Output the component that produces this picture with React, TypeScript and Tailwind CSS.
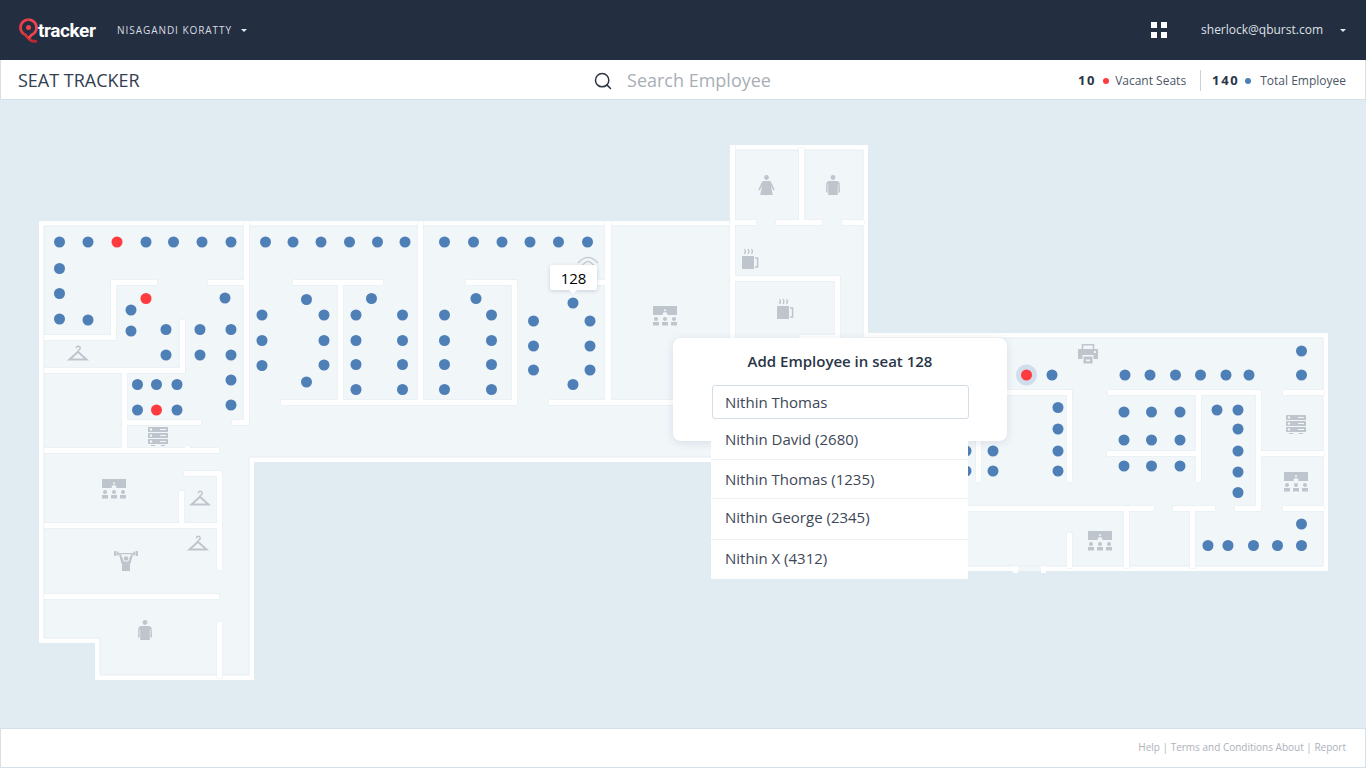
import React from 'react';
import { Search } from 'lucide-react';

type Seat = [number, number];

// floor plan geometry, in page pixels
const walls: [number, number, number, number][] = [
  [244, 221, 5, 204],
  [232, 420, 17, 5],
  [111, 280, 46, 5],
  [208, 280, 36, 5],
  [111, 280, 5, 60],
  [44, 335, 72, 5],
  [44, 368, 141, 5],
  [180, 320, 5, 53],
  [122, 368, 5, 82],
  [127, 420, 74, 5],
  [44, 448, 175, 5],
  [185, 446, 5, 5],
  [184, 471, 38, 5],
  [217, 471, 5, 99],
  [179, 491, 5, 36],
  [44, 523, 178, 5],
  [44, 594, 175, 5],
  [217, 622, 5, 56],
  [418, 221, 5, 182],
  [293, 280, 90, 5],
  [338, 280, 5, 123],
  [281, 400, 236, 5],
  [466, 280, 51, 5],
  [512, 280, 5, 125],
  [549, 400, 200, 5],
  [605, 221, 6, 182],
  [597, 280, 10, 5],
  [730, 145, 5, 260],
  [730, 220, 26, 5],
  [776, 220, 46, 5],
  [842, 220, 22, 5],
  [799, 148, 5, 75],
  [735, 276, 105, 5],
  [835, 276, 5, 64],
  [799, 335, 41, 5],
  [1000, 390, 72, 5],
  [1108, 390, 153, 5],
  [1283, 390, 41, 5],
  [1067, 390, 5, 92],
  [976, 390, 5, 92],
  [1196, 390, 5, 92],
  [1107, 451, 92, 5],
  [1256, 390, 5, 121],
  [1261, 451, 63, 5],
  [900, 506, 254, 5],
  [1173, 506, 42, 5],
  [1235, 506, 26, 5],
  [1283, 506, 41, 5],
  [1124, 506, 5, 62],
  [1190, 506, 5, 62],
  [1067, 533, 5, 35],
];

const blueSeats: Seat[] = [
  [59.5, 242], [88, 242], [146, 242], [173.5, 242], [202, 242], [231, 242],
  [59.5, 268.5], [59.5, 293.5], [59.5, 319], [88, 320],
  [131, 310], [131, 331], [166, 329.5], [166, 355], [225, 298], [200, 329.5],
  [231, 329.5], [200, 355], [231, 355], [231, 380], [231, 405],
  [137.5, 384.5], [156.5, 384.5], [177, 384.5], [137.5, 410], [177, 410],
  [265.5, 242], [293, 242], [321, 242], [349.5, 242], [377.5, 242], [405, 242],
  [444.5, 242], [473.5, 242], [502, 242], [530, 242], [558.5, 242], [587.5, 242],
  [262, 315], [262, 340.5], [262, 365.5],
  [306.5, 299.5], [324, 315], [324, 340.5], [324, 365], [306.5, 382],
  [371.5, 298.5], [356, 315], [402.5, 315], [356, 340.5], [402.5, 340.5],
  [356, 364.5], [402.5, 364.5], [356, 389.5], [402.5, 389.5],
  [476, 298.5], [444.5, 315], [491.5, 315], [444.5, 340.5], [491.5, 340.5],
  [444.5, 364.5], [491.5, 364.5], [444.5, 389.5], [491.5, 389.5],
  [533.5, 321], [533.5, 346], [533.5, 370], [573, 303], [590, 321], [590, 346],
  [590, 370], [573, 384.5],
  [1052, 375], [1125, 375], [1150, 375], [1175.5, 375], [1200.5, 375], [1226, 375],
  [1249, 375], [1301.5, 351], [1301.5, 375],
  [1058, 407.5], [1058, 429], [1058, 451], [1058, 471],
  [993, 451], [993, 471], [966, 451], [966, 471],
  [1124, 412], [1151.5, 412], [1180, 412], [1124, 440], [1151.5, 440], [1180, 440],
  [1124, 466], [1151.5, 466], [1180, 466],
  [1217, 410], [1238, 410], [1238, 429], [1238, 451], [1238, 472], [1238, 492.5],
  [1301.5, 524], [1208, 545.5], [1228, 545.5], [1253.5, 545.5], [1277.5, 545.5], [1301.5, 545.5],
];

const redSeats: Seat[] = [[117, 242], [146, 298.5], [156.5, 410], [1026.5, 375]];

const employees = [
  { label: 'Nithin David (2680)', rowClass: 'h-[41px]' },
  { label: 'Nithin Thomas (1235)', rowClass: 'h-[39px]' },
  { label: 'Nithin George (2345)', rowClass: 'h-[41px] pb-[3px]' },
  { label: 'Nithin X (4312)', rowClass: 'h-[39px] pb-[3px]' },
];

function Hanger({ x, y }: { x: number; y: number }) {
  return (
    <g transform={`translate(${x} ${y})`} fill="none" stroke="#bfc5cc">
      <path d="M8.4 3.2a1.9 1.9 0 1 1 2.6 1.7c-.7.3-1 .7-1 1.6" strokeWidth="1.5" />
      <path d="M10 6.8 1.5 14.5h17Z" strokeWidth="2" strokeLinejoin="miter" />
    </g>
  );
}

function Server({ x, y }: { x: number; y: number }) {
  return (
    <g transform={`translate(${x} ${y})`} fill="#bfc5cc">
      {[0, 6, 12].map((top) => (
        <g key={top}>
          <rect x="0" y={top} width="20" height="5" rx="0.5" />
          <circle cx="3" cy={top + 2.5} r="1.2" fill="#f1f6f9" />
          <rect x="12" y={top + 2} width="6" height="1" fill="#f1f6f9" />
        </g>
      ))}
      <rect x="3" y="18" width="4" height="1" />
      <rect x="13" y="18" width="4" height="1" />
    </g>
  );
}

function Presentation({ x, y }: { x: number; y: number }) {
  return (
    <g transform={`translate(${x} ${y})`} fill="#bfc5cc">
      <rect x="0" y="0" width="24" height="9" />
      <circle cx="12" cy="4.2" r="1" fill="#f1f6f9" />
      <path d="M9.7 9V7.6L11 6.2h2l1.3 1.4V9Z" fill="#f1f6f9" />
      {[3, 12, 21].map((cx) => (
        <g key={cx}>
          <circle cx={cx} cy="13" r="2" />
          <rect x={cx - 3} y="16" width="6" height="3.5" />
        </g>
      ))}
    </g>
  );
}

function Man({ x, y }: { x: number; y: number }) {
  return (
    <g transform={`translate(${x} ${y})`} fill="#bfc5cc">
      <circle cx="7" cy="2.5" r="2.4" />
      <path d="M3.5 6h7c1.8 0 3 1 3.2 2.8L14 17.5h-1.600V9.5h-.6V20H2.200V9.5h-.6v8H0l.3-8.700C.5 7 1.700 6 3.500 6Z" />
    </g>
  );
}

function Woman({ x, y }: { x: number; y: number }) {
  return (
    <g transform={`translate(${x} ${y})`} fill="#bfc5cc">
      <circle cx="8.5" cy="2.5" r="2.4" />
      <path d="M5.800 6h5.400c1 0 1.600.4 2 1.300l3.500 7.500-1.300.7-2.500-4.700L14.800 20H2.200l1.900-9.200-2.500 4.700-1.300-.7 3.500-7.500C4.200 6.400 4.800 6 5.800 6Z" />
    </g>
  );
}

function Mug({ x, y }: { x: number; y: number }) {
  return (
    <g transform={`translate(${x} ${y})`}>
      <rect x="0" y="7" width="12" height="13" rx="0.5" fill="#bfc5cc" />
      <path d="M13 9h2.600v9H13" fill="none" stroke="#bfc5cc" strokeWidth="1.5" />
      <path
        d="M2.500 0c1.200 1.500 1.200 3.500 0 5M6 0c1.200 1.500 1.200 3.500 0 5M9.500 0c1.200 1.500 1.200 3.500 0 5"
        fill="none"
        stroke="#bfc5cc"
        strokeWidth="1.2"
      />
    </g>
  );
}

function Gym({ x, y }: { x: number; y: number }) {
  return (
    <g transform={`translate(${x} ${y})`} fill="#bfc5cc">
      <rect x="0" y="0" width="2" height="5" />
      <rect x="2.5" y="0.5" width="2" height="4" />
      <rect x="19.5" y="0.5" width="2" height="4" />
      <rect x="22" y="0" width="2" height="5" />
      <rect x="4" y="2" width="16" height="1.2" />
      <path d="M5 3.200h1.800L8.500 7h7l1.700-3.800H19l-2.500 9.300-.5.5V20H8v-7l-.5-.5Z" />
      <circle cx="12" cy="7.5" r="3.2" fill="#f1f6f9" />
      <circle cx="12" cy="7.5" r="2.3" />
    </g>
  );
}

function Printer({ x, y }: { x: number; y: number }) {
  return (
    <g transform={`translate(${x} ${y})`}>
      <path d="M4.500 5V.8h11V5" fill="none" stroke="#bfc5cc" strokeWidth="1.5" />
      <path d="M1 5h18a1 1 0 0 1 1 1v9h-4.500v-4h-11v4H0V6a1 1 0 0 1 1-1Z" fill="#bfc5cc" />
      <rect x="16" y="7" width="2" height="2" fill="#f1f6f9" />
      <path d="M5.500 12.500h9v7h-9Zm2.500 3v1.800h4v-1.800Z" fill="#bfc5cc" fillRule="evenodd" />
    </g>
  );
}

function FloorPlan() {
  return (
    <svg className="block w-[1366px] h-[628px]" viewBox="0 100 1366 628">
      {/* building */}
      <path d="M39 221H730V145H868V333H1328V571H850V462H254V680H95V643H39Z" fill="#ffffff" />
      <path
        d="M44 226H735V150H863V338H1323V566H855V457H249V675H100V638H44Z"
        fill="#f1f6f9"
        stroke="#e5edf3"
      />

      {/* inner walls: edge pass first, then white on top so joints merge */}
      {walls.map(([x, y, w, h], i) => (
        <rect key={`edge-${i}`} x={x - 0.5} y={y - 0.5} width={w + 1} height={h + 1} rx="1" fill="#e5edf3" />
      ))}
      {walls.map(([x, y, w, h], i) => (
        <rect key={`wall-${i}`} x={x} y={y} width={w} height={h} fill="#ffffff" />
      ))}

      {/* bottom door */}
      <rect x="1018" y="566" width="23" height="5" fill="#f1f6f9" />
      <rect x="1013" y="566" width="5" height="7" fill="#ffffff" />
      <rect x="1041" y="566" width="5" height="7" fill="#ffffff" />

      {/* room icons */}
      <Hanger x={68} y={345} />
      <Hanger x={190} y={490} />
      <Hanger x={188} y={535} />
      <Server x={148} y={427} />
      <Server x={1286} y={415} />
      <Presentation x={102} y={479} />
      <Presentation x={653} y={306} />
      <Presentation x={1284} y={472} />
      <Presentation x={1088} y={531} />
      <Gym x={114} y={551} />
      <Man x={138} y={620} />
      <Man x={826} y={175} />
      <Woman x={758} y={175} />
      <Mug x={742} y={249} />
      <Mug x={777} y={299} />
      <Printer x={1078} y={344} />

      {/* wifi */}
      <g fill="none" stroke="#c8cdd3" strokeWidth="1.5">
        <path d="M578 263Q588 252 598 263" />
        <path d="M582 266Q588 257 594 266" />
      </g>

      {/* seats */}
      <circle cx="1026.5" cy="375" r="10.5" fill="#d0deeb" />
      {blueSeats.map(([cx, cy]) => (
        <circle key={`${cx}-${cy}`} cx={cx} cy={cy} r="5.5" fill="#4e7fb6" />
      ))}
      {redSeats.map(([cx, cy]) => (
        <circle key={`${cx}-${cy}`} cx={cx} cy={cy} r="5.5" fill="#ff3b3f" />
      ))}
    </svg>
  );
}

function Caret() {
  return <span className="inline-block border-x-[3px] border-t-[3px] border-x-transparent border-t-[#e4e7eb]" />;
}

export default function App() {
  return (
    <div className="flex flex-col w-[1366px] h-[768px] overflow-hidden bg-[#e1ebf2] font-['Open_Sans',sans-serif]">
      {/* Header */}
      <header className="flex items-center justify-between h-[60px] bg-[#242e41] pl-[19px] pr-5 shrink-0">
        <div className="flex items-center">
          <div className="flex items-center w-[98px]">
            <svg width="20" height="25" viewBox="0 0 20 25" className="shrink-0">
              <defs>
                <linearGradient id="pin" x1="0" y1="0" x2="1" y2="1">
                  <stop offset="0" stopColor="#f0444c" />
                  <stop offset="1" stopColor="#b9242c" />
                </linearGradient>
              </defs>
              <path
                d="M9.500 1.700C4.800 1.700 1.500 5 1.500 9.600c0 3.300 2 6 4.800 7.200l3.200 3.500c1.900 2.300 4.500 3.400 8.500 2.900"
                fill="none"
                stroke="url(#pin)"
                strokeWidth="2.8"
              />
              <path
                d="M9.500 1.700c4.700 0 8 3.300 8 7.900 0 3.300-2 6-4.800 7.200l-3.200 3.500"
                fill="none"
                stroke="#f0444c"
                strokeWidth="2.8"
              />
              <circle cx="9.5" cy="9.5" r="2.5" fill="#f0444c" />
            </svg>
            <span className="ml-[-1px] text-[19px] leading-none font-bold text-white font-['Roboto',sans-serif] tracking-[-0.4px]">
              tracker
            </span>
          </div>
          <span className="text-[10px] tracking-[0.95px] text-[#d9dde2]">NISAGANDI KORATTY</span>
          <span className="ml-[9px] flex">
            <Caret />
          </span>
        </div>
        <div className="flex items-center">
          <div className="grid grid-cols-2 gap-[3.5px] w-4 h-4 mr-[34px]">
            <span className="bg-white" />
            <span className="bg-white" />
            <span className="bg-white" />
            <span className="bg-white" />
          </div>
          <span className="text-[12px] text-[#dde0e5]">sherlock@qburst.com</span>
          <span className="ml-[17px] flex">
            <Caret />
          </span>
        </div>
      </header>

      {/* Sub header */}
      <div className="grid grid-cols-[1fr_auto_1fr] items-center h-10 bg-white border-x border-b border-[#d5e0ea] pl-[17px] pr-[19px] pt-[2px] shrink-0">
        <h1 className="text-[18px] text-[#333e50]">SEAT TRACKER</h1>
        <div className="flex items-center gap-[14px]">
          <Search className="w-5 h-5 text-[#2b3442]" strokeWidth={1.8} />
          <span className="text-[18px] text-[#a9aeb5]">Search Employee</span>
        </div>
        <div className="flex items-center justify-end text-[12px] text-[#4d5666]">
          <span className="font-bold text-[13px] tracking-[1.6px] text-[#2b3547]">10</span>
          <span className="w-[6px] h-[6px] rounded-full bg-[#ff3b3f] ml-[7px]" />
          <span className="ml-[6px]">Vacant Seats</span>
          <span className="w-px h-[21px] bg-[#cdd2d8] ml-[14px] mr-[12px]" />
          <span className="font-bold text-[13px] tracking-[1.6px] text-[#2b3547] ml-[-1px]">140</span>
          <span className="w-[6px] h-[6px] rounded-full bg-[#4e7fb6] ml-[6px]" />
          <span className="ml-[9px]">Total Employee</span>
        </div>
      </div>

      {/* Floor plan */}
      <main className="relative flex-1">
        <FloorPlan />

        {/* seat tooltip */}
        <div className="absolute left-[550px] top-[165px] w-[47px] h-[25px] pt-[2px] flex items-center justify-center bg-white rounded-[2px] shadow-[0_1px_4px_rgba(40,60,90,0.2)] text-[15px] text-black">
          128
          <span className="absolute left-[19px] top-[25px] border-x-[4px] border-t-[4px] border-x-transparent border-t-white" />
        </div>

        {/* add employee popup */}
        <div className="absolute left-[673px] top-[238px] w-[334px] h-[103px] bg-white rounded-lg shadow-[0_2px_10px_rgba(40,60,90,0.12)]">
          <p className="text-center text-[15px] font-semibold text-[#2a3547] pt-[13px] leading-5">
            Add Employee in seat 128
          </p>
          <div className="flex items-center mx-[39px] mt-[14px] w-[257px] h-[34px] border border-[#d3dde8] rounded-[3px] pl-3 text-[15px] text-[#3d4757]">
            Nithin Thomas
          </div>
        </div>
        <div className="absolute left-[711px] top-[319px] w-[257px] bg-white">
          {employees.map((employee, i) => (
            <div
              key={employee.label}
              className={`flex items-center pl-[14px] text-[15px] text-[#3d4757] ${employee.rowClass} ${
                i < employees.length - 1 ? 'border-b border-[#eef2f5]' : ''
              }`}
            >
              {employee.label}
            </div>
          ))}
        </div>
      </main>

      {/* Footer */}
      <footer className="flex items-center justify-end h-10 bg-white border border-[#d5e0ea] pr-[19px] pb-[2px] text-[10px] text-[#adb1b8] shrink-0">
        Help | Terms and Conditions About | Report
      </footer>
    </div>
  );
}
